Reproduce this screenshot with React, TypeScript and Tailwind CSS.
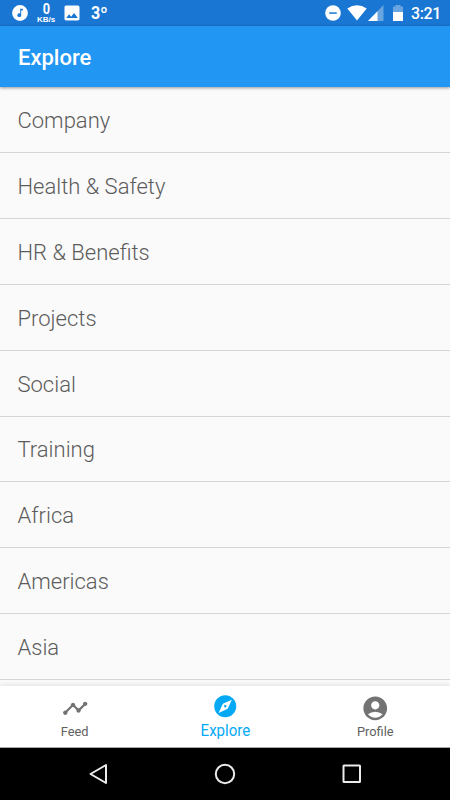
import React, { useState } from 'react';
import { MdAccountCircle, MdExplore, MdImage, MdTimeline } from 'react-icons/md';

const categories = [
  'Company',
  'Health & Safety',
  'HR & Benefits',
  'Projects',
  'Social',
  'Training',
  'Africa',
  'Americas',
  'Asia',
];

const tabs = [
  { name: 'Feed', icon: MdTimeline, size: 26.5 },
  { name: 'Explore', icon: MdExplore, size: 26.5 },
  { name: 'Profile', icon: MdAccountCircle, size: 28.5 },
];

function StatusBar() {
  return (
    <div className="flex h-[26px] shrink-0 items-center justify-between bg-[#1976d2] pr-[9px] pl-3 text-white">
      <div className="flex h-full items-center">
        <svg width="16" height="16" viewBox="0 0 16 16">
          <circle cx="8" cy="8" r="7.9" fill="white" />
          <path d="M8.2 3.8h2.6v1.7H9.2v4.7a1.9 1.9 0 1 1-1-1.7z" fill="#1976d2" />
        </svg>
        <div className="ml-2 flex w-5 flex-col items-center pt-[1px]">
          <span className="scale-x-85 text-[15px] leading-[13px] font-bold">0</span>
          <span className="font-['Liberation_Sans',sans-serif] text-[8px] leading-[8px] font-bold">KB/s</span>
        </div>
        <MdImage size={20} className="ml-[6px]" />
        <span className="ml-[9px] origin-left scale-x-92 pt-[1px] text-[17.5px] leading-none font-bold">3º</span>
      </div>

      <div className="flex h-full items-center">
        <svg width="16" height="16" viewBox="0 0 16 16">
          <circle cx="8" cy="8" r="7.8" fill="white" />
          <path d="M4.2 7.3h7.6v1.5H4.2z" fill="#1976d2" />
        </svg>
        <svg width="20" height="16" viewBox="0 0 20 16" className="ml-[6px]">
          <path d="M0.3 3.4Q10 -3 19.7 3.4L10 15.6z" fill="white" />
        </svg>
        <svg width="16" height="16" viewBox="0 0 16 16" className="ml-[1px]">
          <path d="M15.5 0v16H0z" fill="white" fillOpacity="0.35" />
          <path d="M9.5 6.2V16H0z" fill="white" />
        </svg>
        <svg width="10" height="16" viewBox="0 0 10 16" className="ml-[9px]">
          <path d="M0 1.5h2.5V0h5v1.5H10V7H0z" fill="white" fillOpacity="0.35" />
          <path d="M0 7h10v9H0z" fill="white" />
        </svg>
        <span className="ml-[8px] w-[30px] pt-[2px] text-[16px] leading-none font-medium tracking-[-0.4px]">3:21</span>
      </div>
    </div>
  );
}

function SystemNav() {
  return (
    <div className="flex h-[52px] shrink-0 items-center justify-between bg-black px-[88px]">
      <svg width="20" height="22" viewBox="0 0 20 22" fill="none" stroke="#ececec" strokeWidth="2" strokeLinejoin="round">
        <path d="M18 2v18L2.5 11z" />
      </svg>
      <svg width="22" height="22" viewBox="0 0 22 22" fill="none" stroke="#ececec" strokeWidth="2">
        <circle cx="11" cy="11" r="9.2" />
      </svg>
      <svg width="20" height="22" viewBox="0 0 20 22" fill="none" stroke="#ececec" strokeWidth="2">
        <rect x="1.5" y="2.5" width="16.5" height="16.5" rx="0.5" />
      </svg>
    </div>
  );
}

export default function ExploreScreen() {
  const [activeTab, setActiveTab] = useState('Explore');

  return (
    <div className="flex h-[800px] w-[450px] flex-col overflow-hidden bg-[#fafafa] font-[Roboto,sans-serif]">
      <StatusBar />

      {/* App bar */}
      <div className="z-10 flex h-[61px] shrink-0 items-center bg-[#2196f3] pt-[2px] pl-[18px] shadow-[0_1px_3px_rgba(0,0,0,0.4)]">
        <h1 className="text-[22px] font-medium text-white">Explore</h1>
      </div>

      {/* Categories */}
      <ul className="min-h-0 flex-1 overflow-hidden">
        {categories.map((category) => (
          <li
            key={category}
            className="flex h-[65.92px] items-center border-b border-[#d6d6d6] pt-[2px] pl-[17.5px] text-[22px] font-light text-[#5c5c5c]"
          >
            {category}
          </li>
        ))}
      </ul>

      {/* Tab bar */}
      <div className="z-10 grid h-[62px] shrink-0 grid-cols-3 border-b border-[#a8a8a8] bg-white shadow-[0_-1px_5px_rgba(0,0,0,0.1)]">
        {tabs.map(({ name, icon: Icon, size }) => {
          const active = name === activeTab;
          return (
            <button
              key={name}
              onClick={() => setActiveTab(name)}
              className={`flex flex-col items-center ${active ? 'pt-[6px] text-[#03a9f4]' : 'pt-2 text-[#737373]'}`}
            >
              <span className="flex h-7 items-center">
                <Icon size={size} />
              </span>
              <span
                className={
                  active
                    ? 'scale-x-94 text-[16px] leading-[22px]'
                    : 'scale-x-95 text-[13.5px] leading-[19px] text-[#606060]'
                }
              >
                {name}
              </span>
            </button>
          );
        })}
      </div>

      <SystemNav />
    </div>
  );
}
